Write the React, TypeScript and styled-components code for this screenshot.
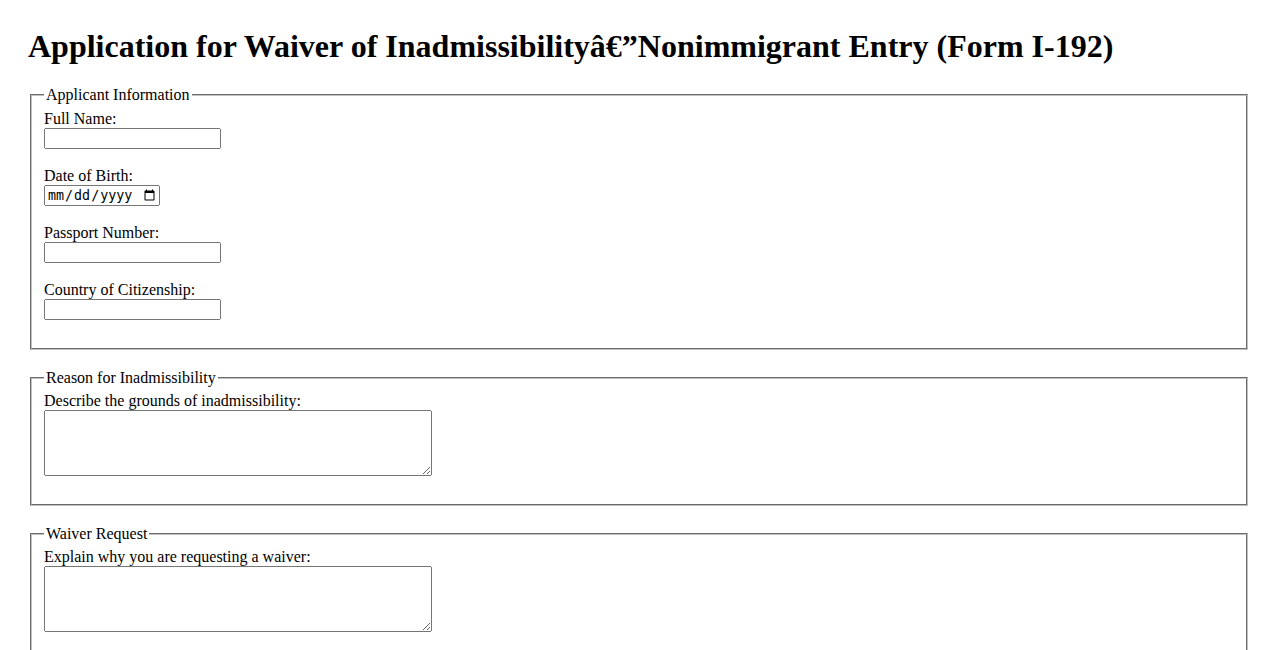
import React from "react";
import styled, { createGlobalStyle } from "styled-components";

const Global = createGlobalStyle`
  html, body { margin: 0; padding: 0; background: #fff; }
  body { font-family: "Liberation Serif", "Times New Roman", serif; font-size: 16px; color: #000; }
`;

const Page = styled.div`
  padding: 28px 28px 28px;
`;

const Title = styled.h1`
  font-size: 32px;
  font-weight: bold;
  margin: 0 0 21.44px;
  line-height: normal;
`;

const Section = styled.fieldset`
  margin: 0 2px 18.6px;
  padding: 5.6px 12px 10px;
  border: 2px groove rgb(192, 192, 192);
  min-width: min-content;
`;

const Legend = styled.legend`
  padding: 0 2px;
`;

const Field = styled.div`
  margin-bottom: 18px;
`;

const Label = styled.label`
  display: block;
`;

const TextInput = styled.input<{ $w: number }>`
  display: block;
  box-sizing: border-box;
  width: ${(p) => p.$w}px;
  height: 21px;
  margin: 0;
  font-size: 13.33px;
`;

const TextArea = styled.textarea`
  display: block;
  box-sizing: border-box;
  width: 388px;
  height: 66px;
  margin: 0;
  font-family: "Liberation Mono", monospace;
  font-size: 13.33px;
`;

export default function App() {
  return (
    <Page>
      <Global />
      <Title>Application for Waiver of Inadmissibilityâ€{"\u201D"}Nonimmigrant Entry (Form I-192)</Title>
      <form>
        <Section>
          <Legend>Applicant Information</Legend>
          <Field>
            <Label htmlFor="name">Full Name:</Label>
            <TextInput id="name" type="text" $w={177} />
          </Field>
          <Field>
            <Label htmlFor="dob">Date of Birth:</Label>
            <TextInput id="dob" type="date" $w={116} />
          </Field>
          <Field>
            <Label htmlFor="passport">Passport Number:</Label>
            <TextInput id="passport" type="text" $w={177} />
          </Field>
          <Field>
            <Label htmlFor="country">Country of Citizenship:</Label>
            <TextInput id="country" type="text" $w={177} />
          </Field>
        </Section>
        <Section>
          <Legend>Reason for Inadmissibility</Legend>
          <Field>
            <Label htmlFor="reason">Describe the grounds of inadmissibility:</Label>
            <TextArea id="reason" />
          </Field>
        </Section>
        <Section>
          <Legend>Waiver Request</Legend>
          <Field>
            <Label htmlFor="waiver">Explain why you are requesting a waiver:</Label>
            <TextArea id="waiver" />
          </Field>
        </Section>
      </form>
    </Page>
  );
}
